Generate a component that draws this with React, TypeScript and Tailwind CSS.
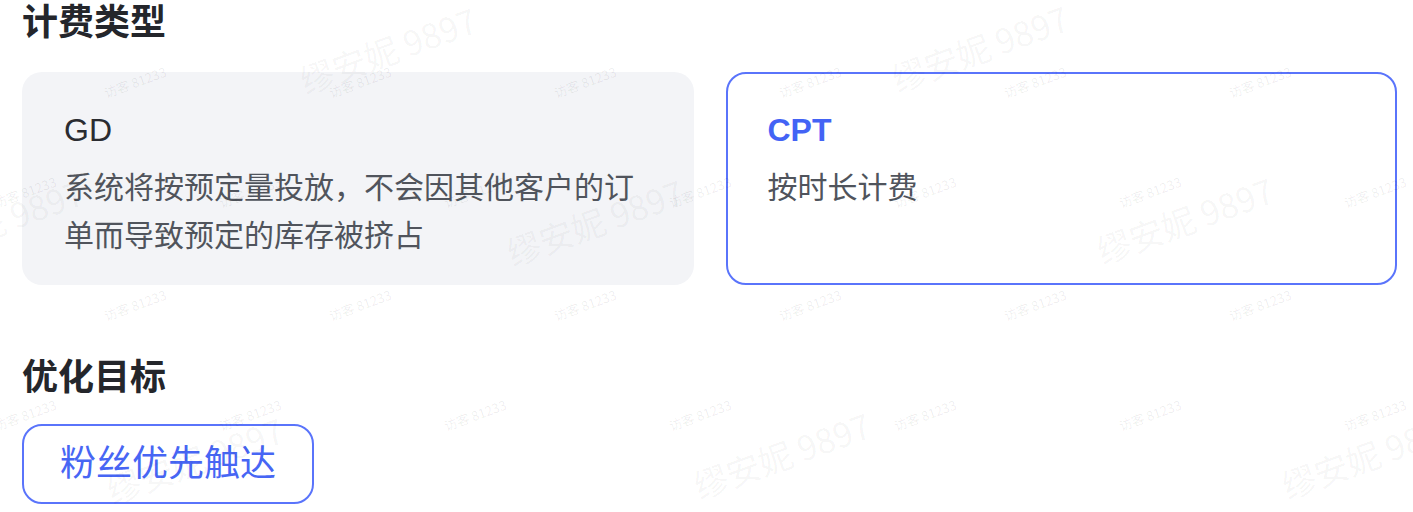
import React from 'react';

const font = "font-['Liberation_Sans','Noto_Sans_CJK_SC',sans-serif]";

// watermark tiles (centre points), measured from the screenshot
const smallMarks: [number, number][] = [];
[82, 305].forEach(y => [135, 360, 585, 810, 1035, 1260].forEach(x => smallMarks.push([x, y])));
[192, 415].forEach(y => [25, 250, 475, 700, 925, 1150, 1375].forEach(x => smallMarks.push([x, y])));

const bigMarks: [number, number][] = [
  [388, 50],
  [980, 48],
  [-5, 222],
  [595, 222],
  [1185, 220],
  [195, 460],
  [782, 455],
  [1370, 455],
];

function Watermark() {
  return (
    <div className="pointer-events-none absolute inset-0 overflow-hidden font-['Noto_Sans_CJK_SC',sans-serif]">
      {smallMarks.map(([x, y], i) => (
        <span
          key={`s${i}`}
          className="absolute -translate-x-1/2 -translate-y-1/2 -rotate-[20deg] whitespace-nowrap text-[13px] leading-none text-black/[0.07]"
          style={{ left: x, top: y }}
        >
          访客 81233
        </span>
      ))}
      {bigMarks.map(([x, y], i) => (
        <span
          key={`b${i}`}
          className="absolute -translate-x-1/2 -translate-y-1/2 -rotate-[20deg] whitespace-nowrap text-[34px] leading-none text-black/[0.045]"
          style={{ left: x, top: y }}
        >
          缪安妮 9897
        </span>
      ))}
    </div>
  );
}

export default function App() {
  return (
    <div className={`relative h-[512px] w-[1413px] overflow-hidden bg-white pl-[22px] pr-[16px] ${font}`}>
      <h2 className="text-[36px] font-semibold leading-[45px] text-[#24262b]">计费类型</h2>

      <div className="mt-[27px] grid grid-cols-2 gap-[32px]">
        <div className="rounded-[20px] bg-[#f3f4f7] px-[42px] pb-[25px] pt-[36px]">
          <div className="text-[32px] font-medium leading-[44px] text-[#2a2c31]">GD</div>
          <p className="mt-[12px] text-[30px] leading-[48px] text-[#50545c]">
            系统将按预定量投放，不会因其他客户的订单而导致预定的库存被挤占
          </p>
        </div>
        <div className="rounded-[20px] border-2 border-[#5a74fb] bg-white px-[40px] pb-[23px] pt-[34px]">
          <div className="text-[32px] font-semibold leading-[44px] text-[#4363f5]">CPT</div>
          <p className="mt-[12px] text-[30px] leading-[48px] text-[#50545c]">按时长计费</p>
        </div>
      </div>

      <h2 className="mt-[70px] text-[36px] font-semibold leading-[45px] text-[#24262b]">优化目标</h2>

      <button className="mt-[24px] flex h-[80px] items-center rounded-[20px] border-2 border-[#5a74fb] bg-white px-[36px] text-[36px] leading-none text-[#4766f4]">
        粉丝优先触达
      </button>

      <Watermark />
    </div>
  );
}
